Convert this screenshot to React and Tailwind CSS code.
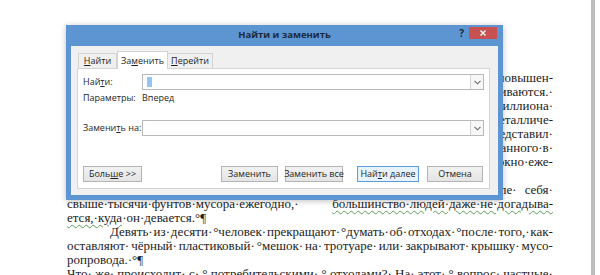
import React from "react";

const ui = { fontFamily: '"Open Sans", "Noto Sans", sans-serif' };
const serif = { fontFamily: '"Liberation Serif", "Times New Roman", serif' };

// Строка документа: выравнивание по ширине через flex ("~" — точка без растяжки)
const Line = ({ text, className = "", justify = true }) => {
  const tokens = text
    .split("·")
    .map((t, i, arr) => (i < arr.length - 1 ? t + "·" : t))
    .filter(Boolean)
    .map((t) => t.replaceAll("~", "·"));
  if (!justify) {
    return <div className={"h-[14px] whitespace-pre " + className}>{text}</div>;
  }
  return (
    <div className={"h-[14px] flex justify-between whitespace-pre " + className}>
      {tokens.map((t, i) => (
        <span key={i}>{t}</span>
      ))}
    </div>
  );
};

const Btn = ({ children, className = "", focused = false }) => (
  <div
    className={
      "h-[16px] flex items-center justify-center whitespace-nowrap text-[9px] text-[#1f1f1f] border " +
      (focused
        ? "border-[#5a9ee0] bg-[#e8f2fb] "
        : "border-[#b4b4b4] bg-gradient-to-b from-[#f2f2f2] to-[#e4e4e4] ") +
      className
    }
  >
    <span>{children}</span>
  </div>
);

const Combo = ({ caret = false }) => (
  <div className="flex-1 h-[16px] bg-white border border-[#b9b9b9] flex items-stretch">
    <div className="flex-1 flex items-center pl-[4px]">
      {caret && <div className="w-[5px] h-[10px] bg-[#94c6f1]" />}
    </div>
    <div className="w-[13px] border-l border-[#d4d4d4] bg-[#f7f7f7] flex items-center justify-center">
      <svg width="7" height="5" viewBox="0 0 7 5">
        <path d="M0.5 0.8 L3.5 3.8 L6.5 0.8" fill="none" stroke="#6a6a6a" strokeWidth="1.1" />
      </svg>
    </div>
  </div>
);

export default function App() {
  return (
    <div className="relative w-[600px] h-[275px] overflow-hidden bg-white flex">
      {/* документ */}
      <div className="w-[591px] shrink-0 pt-[71px] pl-[67px] text-[13px] leading-[14px] text-[#1c1c1c]" style={serif}>
        <div className="w-[486px]">
          <Line text="В·последние·годы·интерес·к·проблеме·бытовых·отходов·заметно·повышен-" />
          <Line text="но,·однако·отходы·по-прежнему·вывозятся·на·свалки·и·там·накапливаются.·" />
          <Line text="По·данным·экологов,·каждый·год·в·мире·выбрасывается·свыше·миллиона·" />
          <Line text="тонн·пластика,·бумаги,·стекла,·пищевых·остатков·и·металличе-" />
          <Line text="ских·изделий.·Один·из·исследователей·однажды·наглядно·представил·" />
          <Line text="объём·мусора,·выброшенного·одной·семьёй·и·не·переработанного~в·" />
          <Line text="течение·года:·такой·объём·едва·ли·можно·вынести·через·окно~еже-" />
          <Line text="дневно.°¶" justify={false} />
          <Line text="Каждый·средний·житель·большого·города·ежегодно·оставляет·после·себя·" />
          <div className="h-[14px] flex justify-between whitespace-pre">
            <span>свыше·тысячи·фунтов·мусора·ежегодно,·</span>
            <span className="underline decoration-wavy decoration-[#5aa05a] decoration-1 underline-offset-2">
              большинство·людей·даже·не·догадыва-
            </span>
          </div>
          <div className="h-[14px] whitespace-pre">
            <span className="underline decoration-wavy decoration-[#5aa05a] decoration-1 underline-offset-2">ется,·куда</span>
            <span>·он·девается.°¶</span>
          </div>
          <Line className="pl-[43px]" text="Девять·из·десяти·°человек·прекращают·°думать·об·отходах·°после·того,·как-" />
          <Line text="оставляют·чёрный·пластиковый·°мешок·на·тротуаре·или·закрывают·крышку·мусо-" />
          <Line text="ропровода.·°¶" justify={false} />
          <Line text="Что·же·происходит·с·° потребительскими·° отходами?·На·этот·° вопрос·частные·" />
        </div>
      </div>
      <div className="w-[4px] shrink-0 bg-[#bdbdbd]" />

      {/* диалог */}
      <div
        className="absolute left-[66px] top-[25px] w-[437px] h-[175px] bg-[#5d95d3] flex flex-col px-[5px] pb-[5px] shadow-[0_1px_6px_rgba(0,0,0,0.25)]"
        style={ui}
      >
        <div className="relative h-[21px] shrink-0 flex items-center justify-center">
          <span className="text-[9.5px] font-bold text-[#1a2a3a]">Найти и заменить</span>
          <div className="absolute right-[1px] top-[2px] flex items-start">
            <span className="text-[10px] font-bold text-[#1a2a3a] leading-[12px] mr-[5px]">?</span>
            <div className="w-[28px] h-[12px] bg-[#c75050] flex items-center justify-center">
              <svg width="6" height="6" viewBox="0 0 6 6">
                <path d="M0.5 0.5 L5.5 5.5 M5.5 0.5 L0.5 5.5" stroke="#ffffff" strokeWidth="1.4" />
              </svg>
            </div>
          </div>
        </div>

        <div className="flex-1 bg-[#f0f0f0] pt-[4px] pl-[6px] pr-[8px] pb-[6px] flex flex-col">
          {/* вкладки */}
          <div className="h-[18px] shrink-0 flex items-end pl-[1px] text-[9px] text-[#1f1f1f]">
            <div className="w-[39px] h-[15px] border border-b-0 border-[#d4d4d4] bg-[#f0f0f0] flex items-center justify-center">
              <span><u>Н</u>айти</span>
            </div>
            <div className="relative z-10 w-[51px] h-[18px] -mb-px border border-b-0 border-[#d4d4d4] bg-white flex items-center justify-center">
              <span>За<u>м</u>енить</span>
            </div>
            <div className="w-[45px] h-[15px] border border-b-0 border-l-0 border-[#d4d4d4] bg-[#f0f0f0] flex items-center justify-center">
              <span><u>П</u>ерейти</span>
            </div>
          </div>

          {/* панель */}
          <div className="flex-1 bg-white border border-[#d4d4d4] pt-[5px] pl-[5px] pr-[5px] pb-[6px] flex flex-col text-[9px] text-[#1f1f1f]">
            <div className="flex items-center">
              <span className="w-[59px] shrink-0">Най<u>т</u>и:</span>
              <Combo caret />
            </div>
            <div className="flex items-center h-[13px] mt-[1px]">
              <span className="w-[59px] shrink-0">Параметры:</span>
              <span>Вперед</span>
            </div>
            <div className="flex items-center mt-[16px]">
              <span className="w-[59px] shrink-0">Замени<u>т</u>ь на:</span>
              <Combo />
            </div>
            <div className="mt-auto flex items-center">
              <Btn className="w-[59px]">Боль<u>ш</u>е &gt;&gt;</Btn>
              <Btn className="w-[57px] ml-auto">Заменить</Btn>
              <Btn className="w-[58px] ml-[7px]">Заменить все</Btn>
              <Btn className="w-[62px] ml-[14px]" focused>
                Най<u>т</u>и далее
              </Btn>
              <Btn className="w-[56px] ml-[8px] mr-[1px]">Отмена</Btn>
            </div>
          </div>
        </div>
      </div>
    </div>
  );
}
